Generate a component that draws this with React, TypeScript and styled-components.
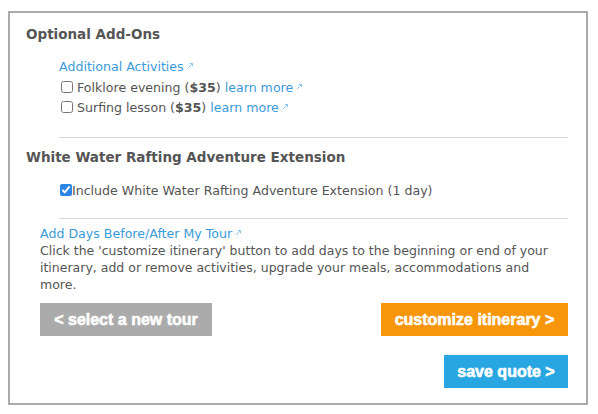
import React from "react";
import styled, { createGlobalStyle } from "styled-components";

const Global = createGlobalStyle`
  html, body { margin: 0; padding: 0; background: #fff; }
  body { font-family: Verdana, "DejaVu Sans", sans-serif; color: #555; }
`;

const Box = styled.div`
  box-sizing: border-box;
  width: 580px;
  height: 394px;
  margin: 11px 0 0 8px;
  border: 2px solid #ababab;
  padding: 12px 18px 15px 16px;
  display: flex;
  flex-direction: column;
`;

const Title = styled.h2<{ $top?: number }>`
  margin: ${(p) => p.$top ?? 0}px 0 0 0;
  font-size: 13.5px;
  line-height: 18px;
  font-weight: bold;
  color: #555;
`;

const Indent = styled.div<{ $left: number; $top: number }>`
  margin: ${(p) => p.$top}px 0 0 ${(p) => p.$left}px;
  display: flex;
  flex-direction: column;
`;

const LinkLine = styled.div`
  font-size: 12.6px;
  line-height: 17px;
  height: 17px;
`;

const Link = styled.a`
  color: #3b9ad9;
  text-decoration: none;
  font-size: 12.6px;
  line-height: 17px;
  display: inline-flex;
  align-items: flex-start;
  cursor: pointer;
`;

const Row = styled.label<{ $top?: number }>`
  display: flex;
  align-items: center;
  height: 20px;
  margin-top: ${(p) => p.$top ?? 0}px;
  font-size: 12.6px;
  color: #555;
  white-space: pre;
`;

const Check = styled.input<{ $ml: number; $mr: number }>`
  width: 12px;
  height: 12px;
  margin: 0 ${(p) => p.$mr}px 0 ${(p) => p.$ml}px;
  accent-color: #2e85e8;
`;

const Strong = styled.b`
  color: #555;
`;

const Divider = styled.hr<{ $top: number }>`
  border: 0;
  border-top: 1px solid #d9d9d9;
  margin: ${(p) => p.$top}px 0 0 33px;
  height: 0;
`;

const Para = styled.p`
  margin: 0;
  font-size: 12.5px;
  line-height: 17px;
  color: #555;
`;

const ButtonRow = styled.div<{ $top: number; $end?: boolean }>`
  display: flex;
  justify-content: ${(p) => (p.$end ? "flex-end" : "space-between")};
  margin: ${(p) => p.$top}px 0 0 ${(p) => (p.$end ? 0 : 14)}px;
`;

const Btn = styled.button<{ $bg: string; $w: number }>`
  width: ${(p) => p.$w}px;
  height: 33px;
  border: 0;
  background: ${(p) => p.$bg};
  color: #fff;
  font-family: "Liberation Sans", Arial, sans-serif;
  font-weight: bold;
  font-size: 16px;
  -webkit-text-stroke: 0.6px #fff;
  padding: 0;
  cursor: pointer;
`;

const ExtIcon = styled.svg`
  margin: 4px 0 0 3px;
  flex: none;
`;

const Ext = () => (
  <ExtIcon width="7" height="7" viewBox="0 0 7 7">
    <path d="M1 6 L5.5 1.5 M2.8 1.5 H5.5 V4.2" stroke="#8cc3ea" strokeWidth="1" fill="none" />
  </ExtIcon>
);

export default function App() {
  return (
    <>
      <Global />
      <Box>
        <Title>Optional Add-Ons</Title>
        <Indent $left={33} $top={15}>
          <LinkLine>
            <Link>
              Additional Activities
              <Ext />
            </Link>
          </LinkLine>
          <Row $top={2}>
            <Check type="checkbox" $ml={2} $mr={4} />
            Folklore evening (<Strong>$35</Strong>){" "}
            <Link>
              learn more
              <Ext />
            </Link>
          </Row>
          <Row>
            <Check type="checkbox" $ml={2} $mr={4} />
            Surfing lesson (<Strong>$35</Strong>){" "}
            <Link>
              learn more
              <Ext />
            </Link>
          </Row>
        </Indent>
        <Divider $top={20} />
        <Title $top={10}>White Water Rafting Adventure Extension</Title>
        <Indent $left={33} $top={14}>
          <Row>
            <Check type="checkbox" defaultChecked $ml={1} $mr={0} />
            Include White Water Rafting Adventure Extension (1 day)
          </Row>
        </Indent>
        <Divider $top={18} />
        <Indent $left={14} $top={6}>
          <LinkLine>
            <Link>
              Add Days Before/After My Tour
              <Ext />
            </Link>
          </LinkLine>
          <Para>
            Click the 'customize itinerary' button to add days to the beginning or end of your
            itinerary, add or remove activities, upgrade your meals, accommodations and more.
          </Para>
        </Indent>
        <ButtonRow $top={10}>
          <Btn $bg="#ababab" $w={172}>&lt; select a new tour</Btn>
          <Btn $bg="#f7960a" $w={187}>customize itinerary &gt;</Btn>
        </ButtonRow>
        <ButtonRow $top={19} $end>
          <Btn $bg="#28a6e1" $w={124}>save quote &gt;</Btn>
        </ButtonRow>
      </Box>
    </>
  );
}
